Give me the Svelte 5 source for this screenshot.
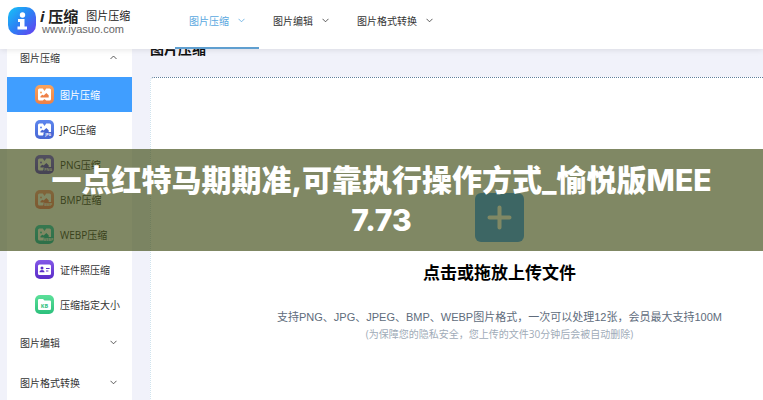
<script>
    const navItems = ['图片压缩', '图片编辑', '图片格式转换'];
    const tools = [
        { name: '图片压缩', from: '#f9a35c', to: '#ee8046', kind: 'image' },
        { name: 'JPG压缩', from: '#5d86ee', to: '#4867d4', kind: 'image', tag: 'JPG' },
        { name: 'PNG压缩', from: '#7a5cf0', to: '#5a3cd0', kind: 'image', tag: 'PNG' },
        { name: 'BMP压缩', from: '#ff9c88', to: '#f87a6c', kind: 'image', tag: 'BMP' },
        { name: 'WEBP压缩', from: '#2fd0c4', to: '#14b8b0', kind: 'image', tag: 'WEBP' },
        { name: '证件照压缩', from: '#8458e8', to: '#5a2cc8', kind: 'card' },
        { name: '压缩指定大小', from: '#5ce09a', to: '#2cc07c', kind: 'folder' }
    ];

    let activeNav = 0;
    let activeTool = 0;
    let open = true;
</script>

<div class="page">
    <header>
        <a class="logo" href="/">
            <svg width="28" height="28" viewBox="0 0 28 28" aria-hidden="true">
                <defs>
                    <linearGradient id="logoFill" x1="0" y1="0" x2="1" y2="1">
                        <stop offset="0" stop-color="#16c4f8" />
                        <stop offset="0.5" stop-color="#2c80f4" />
                        <stop offset="1" stop-color="#6a3cf0" />
                    </linearGradient>
                </defs>
                <rect width="28" height="28" rx="10" fill="url(#logoFill)" />
                <circle cx="14.5" cy="8" r="2.7" fill="#fff" />
                <path d="M10 12h6.500v7.500H19V22.500H9.500v-3H12v-4.500h-2z" fill="#fff" />
            </svg>
            <span class="brand">
                <span class="brandName"><b><i>i</i> 压缩</b><span>图片压缩</span></span>
                <span class="domain">www.iyasuo.com</span>
            </span>
        </a>
        <nav>
            {#each navItems as item, i}
                <button class:active={activeNav === i} on:click={() => (activeNav = i)}>
                    {item}
                    <svg width="7" height="5" viewBox="0 0 7 5" aria-hidden="true"><path d="M0.5 0.8 3.5 3.8 6.5 0.8" /></svg>
                </button>
            {/each}
        </nav>
    </header>

    <div class="content">
        <aside>
            <button class="group" on:click={() => (open = !open)}>
                图片压缩
                <svg width="7" height="5" viewBox="0 0 7 5" aria-hidden="true"><path d="M0.5 4 3.5 1 6.5 4" /></svg>
            </button>
            {#if open}
                {#each tools as tool, i}
                    <button class="tool" class:active={activeTool === i} on:click={() => (activeTool = i)}>
                        <svg width="19" height="19" viewBox="0 0 19 19" aria-hidden="true">
                            <defs>
                                <linearGradient id="tool{i}" x1="0" y1="0" x2="0" y2="1">
                                    <stop offset="0" stop-color={tool.from} />
                                    <stop offset="1" stop-color={tool.to} />
                                </linearGradient>
                            </defs>
                            <rect width="19" height="19" rx="5" fill="url(#tool{i})" />
                            {#if tool.kind === 'image'}
                                <path d="M4.500 3.500h3.300l1.700 2.500L11.200 3.500h3.300q1.500 0 1.500 1.500v9q0 1.500-1.500 1.500h-3.300L9.500 14l-1.700 1.500H4.500Q3 15.500 3 14V5q0-1.500 1.500-1.500z" fill="#fff" />
                                <circle cx="6" cy="7.500" r="1" fill={tool.from} />
                                <path d="M5.500 12.500v-1.300l1.800-1.400 1.400.8L11.300 8l2.400 2.200v2.300z" fill={tool.to} />
                                {#if tool.tag}
                                    <rect x="8.500" y="12" width="9.500" height="5" rx="1.500" fill={tool.to} />
                                    <text x="13.200" y="15.800" font-size="3.600" font-weight="700" text-anchor="middle" fill="#fff">{tool.tag}</text>
                                {/if}
                            {:else if tool.kind === 'card'}
                                <rect x="3" y="4.500" width="13" height="10.500" rx="1.500" fill="#fff" />
                                <circle cx="7" cy="8" r="1.500" fill={tool.to} />
                                <path d="M4.500 12.300c0-3.200 5-3.200 5 0z" fill={tool.to} />
                                <path d="M11 8.500h3.600M11 11h2.400" stroke={tool.to} stroke-width="1" />
                            {:else}
                                <path d="M3 5.200Q3 4 4.200 4H8l1.500 1.500h5.300Q16 5.500 16 6.700v7.100q0 1.200-1.200 1.200H4.200Q3 15 3 13.800z" fill="#fff" />
                                <text x="9.500" y="12.500" font-size="5.500" font-weight="700" text-anchor="middle" fill={tool.to}>KB</text>
                            {/if}
                        </svg>
                        {tool.name}
                    </button>
                {/each}
            {/if}
            {#each navItems.slice(1) as item}
                <button class="group">
                    {item}
                    <svg width="7" height="5" viewBox="0 0 7 5" aria-hidden="true"><path d="M0.5 0.8 3.5 3.8 6.5 0.8" /></svg>
                </button>
            {/each}
        </aside>

        <main>
            <h2>图片压缩</h2>
            <div class="dropzone">
                <button class="add" aria-label="上传文件">
                    <svg width="25" height="25" viewBox="0 0 25 25" aria-hidden="true"><path d="M12.500 2.500v20M2.500 12.500h20" /></svg>
                </button>
                <h3>点击或拖放上传文件</h3>
                <p>支持PNG、JPG、JPEG、BMP、WEBP图片格式，一次可以处理12张，会员最大支持100M</p>
                <small>(为保障您的隐私安全，您上传的文件30分钟后会被自动删除)</small>
            </div>
        </main>
    </div>

    <h1 class="banner">一点红特马期期准,可靠执行操作方式_愉悦版MEE7.73</h1>
</div>

<style>
    :global(body) {
        margin: 0;
    }
    .page {
        position: relative;
        height: 100vh;
        overflow: hidden;
        background: #f1f2fa;
        color: #333;
        font-family: "Open Sans", "Noto Sans CJK SC", sans-serif;
        font-size: 10px;
    }
    button {
        border: none;
        padding: 0;
        background: none;
        color: inherit;
        font: inherit;
        cursor: pointer;
    }
    svg {
        flex: none;
    }
    header {
        position: relative;
        z-index: 1;
        display: flex;
        height: 49px;
        background: #fff;
        box-shadow: 0 1px 6px rgba(0, 0, 0, 0.1);
    }
    .logo {
        display: flex;
        align-items: center;
        gap: 4px;
        box-sizing: border-box;
        width: 175px;
        padding: 0 0 7px 8px;
        color: #222;
        text-decoration: none;
    }
    .brand {
        display: flex;
        flex-direction: column;
    }
    .brandName {
        display: flex;
        align-items: center;
        gap: 8px;
        font-size: 11px;
        line-height: 16px;
    }
    .brandName b {
        font-size: 15px;
    }
    .domain {
        padding-left: 2px;
        color: #666;
        font-family: "Liberation Sans", sans-serif;
        font-size: 11px;
        line-height: 11px;
    }
    nav {
        display: flex;
    }
    nav button {
        display: flex;
        align-items: center;
        gap: 9px;
        padding: 0 14px 6px;
        border-bottom: 2px solid transparent;
    }
    nav button.active {
        border-color: #5f9fd0;
        color: #5aa8e0;
    }
    nav path,
    .group path {
        fill: none;
        stroke: currentColor;
        stroke-width: 0.8;
    }
    .content {
        display: flex;
        gap: 18px;
        margin-top: -12px;
        padding-left: 7px;
    }
    aside {
        flex: none;
        width: 125px;
        background: #fff;
    }
    .group {
        display: flex;
        align-items: center;
        justify-content: space-between;
        width: 100%;
        height: 40px;
        padding: 0 15px 0 13px;
    }
    .tool {
        display: flex;
        align-items: center;
        gap: 6px;
        width: 100%;
        height: 35px;
        padding-left: 28px;
    }
    .tool.active {
        background: #409eff;
        color: #fff;
    }
    main {
        display: flex;
        flex: 1;
        flex-direction: column;
    }
    h2 {
        margin: 0;
        padding-bottom: 16px;
        color: #111;
        font-size: 14px;
        line-height: 24px;
    }
    .dropzone {
        display: flex;
        flex: 1;
        flex-direction: column;
        align-items: center;
        border-top: 1px dotted #5f7f9c;
        border-left: 1px dotted #cfe3ee;
        border-radius: 4px 0 0 4px;
        padding: 115px 0 0 85px;
        background: #fff;
        white-space: nowrap;
    }
    .add {
        display: flex;
        align-items: center;
        justify-content: center;
        width: 49px;
        height: 49px;
        border-radius: 6px;
        background: #409eff;
    }
    .add path {
        stroke: #fff;
        stroke-width: 4;
        stroke-linecap: round;
    }
    h3 {
        margin: 18px 0;
        color: #000;
        font-size: 17px;
        line-height: 26px;
    }
    p {
        margin: 4px 0 0;
        color: #606c7c;
        font-family: "Liberation Sans", "Noto Sans CJK SC", sans-serif;
        font-size: 11px;
        line-height: 18px;
    }
    small {
        color: #a0abb8;
        font-size: 10px;
        line-height: 16px;
    }
    .banner {
        position: absolute;
        top: 149px;
        left: 0;
        right: 0;
        margin: 0;
        padding: 11px 50px;
        background: rgba(60, 72, 17, 0.65);
        color: #fff;
        font-family: Inter, "Noto Sans CJK SC", sans-serif;
        font-size: 30px;
        font-weight: 800;
        line-height: 40px;
        text-align: center;
        word-break: break-all;
    }
</style>
